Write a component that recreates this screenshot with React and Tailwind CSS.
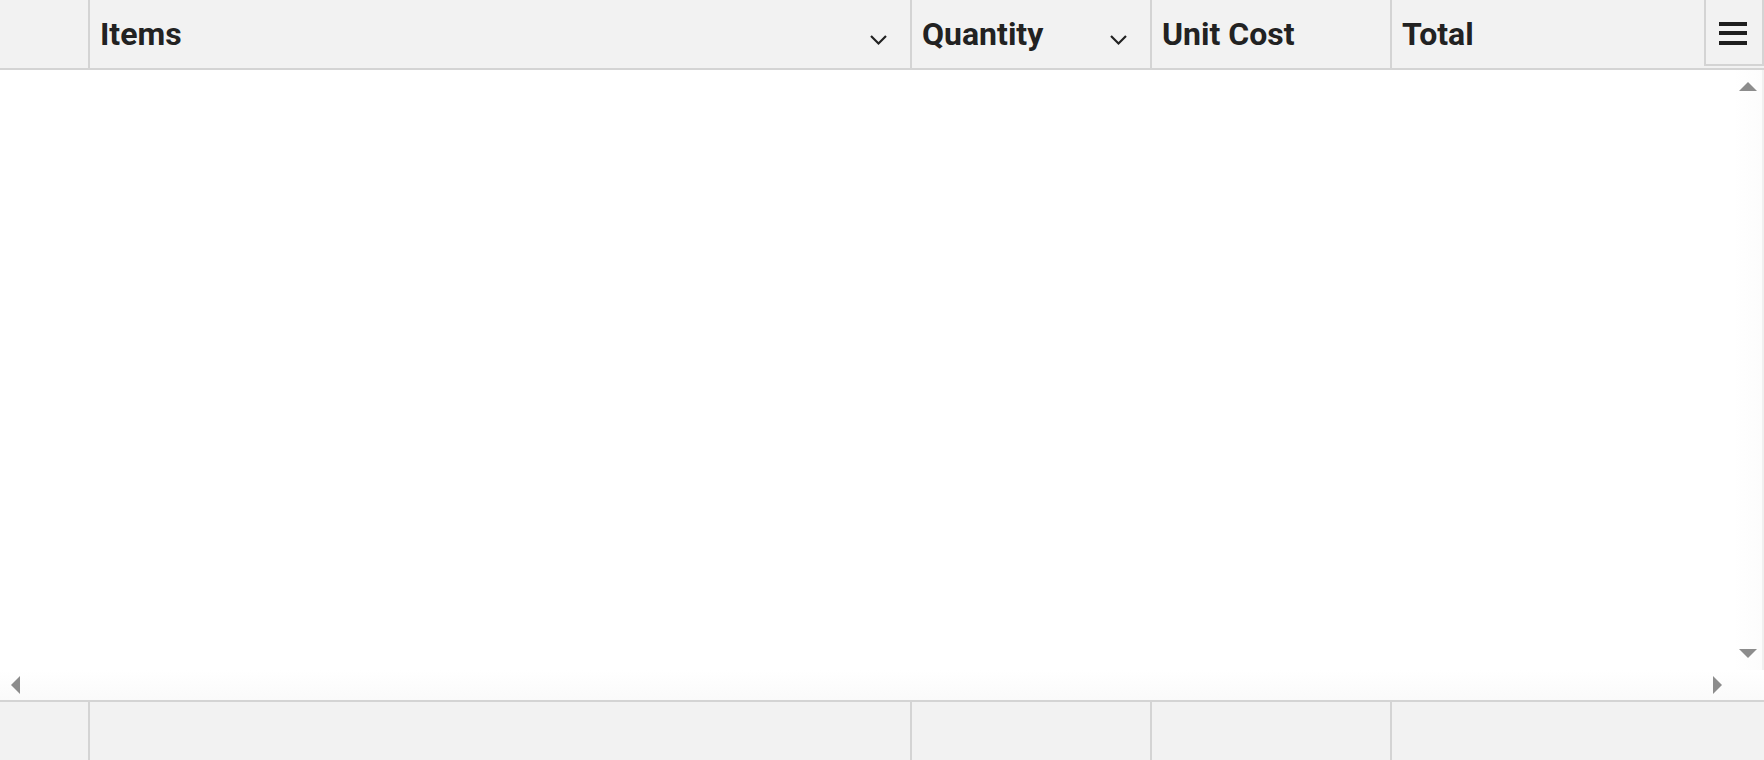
import React from "react";

const cols = [
  { key: "sel", label: "", width: "w-[88px]" },
  { key: "items", label: "Items", width: "w-[822px]", chevron: true },
  { key: "qty", label: "Quantity", width: "w-[240px]", chevron: true },
  { key: "unit", label: "Unit Cost", width: "w-[240px]" },
  { key: "total", label: "Total", width: "flex-1" },
];

const Chevron = () => (
  <svg width="19" height="12" viewBox="0 0 19 12" className="shrink-0 mt-[12px]">
    <path d="M2 2 L9.5 9.5 L17 2" fill="none" stroke="#222" strokeWidth="2.2" />
  </svg>
);

const Tri = ({ dir }) => {
  const pts = {
    up: "0,9 9,0 18,9",
    down: "0,0 18,0 9,9",
    left: "9,0 9,18 0,9",
    right: "0,0 9,9 0,18",
  }[dir];
  const vert = dir === "up" || dir === "down";
  return (
    <svg width={vert ? 18 : 9} height={vert ? 9 : 18} viewBox={vert ? "0 0 18 9" : "0 0 9 18"}>
      <polygon points={pts} fill="#8c8c8c" />
    </svg>
  );
};

export default function App() {
  return (
    <div
      className="w-[1764px] h-[760px] bg-white flex flex-col text-[#222] overflow-hidden"
      style={{ fontFamily: "Roboto, 'Liberation Sans', sans-serif" }}
    >
      {/* header */}
      <div className="h-[70px] flex bg-[#f2f2f2] border-b-2 border-[#d4d4d4] relative">
        {cols.map((c, i) => (
          <div
            key={c.key}
            className={`${c.width} shrink-0 h-full flex items-center justify-between pl-[10px] pr-[22px] ${
              i > 0 ? "border-l-2 border-[#d4d4d4]" : ""
            }`}
          >
            <span className="text-[32px] font-bold leading-none">{c.label}</span>
            {c.chevron && <Chevron />}
          </div>
        ))}
        {/* column menu button */}
        <div className="absolute right-0 top-0 w-[60px] h-[66px] border-l-2 border-r-2 border-b-2 border-[#d4d4d4] bg-[#f2f2f2] flex items-center justify-center">
          <div className="flex flex-col gap-[5.5px] w-[28px] ml-[-2px] mt-[2px]">
            <div className="h-[4px] bg-[#1e1e1e]" />
            <div className="h-[4px] bg-[#1e1e1e]" />
            <div className="h-[4px] bg-[#1e1e1e]" />
          </div>
        </div>
      </div>

      {/* body */}
      <div className="h-[630px] flex flex-col">
        <div className="flex-1 flex">
          <div className="flex-1" />
          <div className="w-[30px] flex flex-col items-center justify-between py-[12px] bg-gradient-to-r from-white to-[#fcfcfc] border-r-2 border-[#f0f0f0]">
            <Tri dir="up" />
            <Tri dir="down" />
          </div>
        </div>
        <div className="h-[30px] flex items-center justify-between pl-[11px] pr-[42px] bg-gradient-to-b from-white to-[#fafafa]">
          <Tri dir="left" />
          <Tri dir="right" />
        </div>
      </div>

      {/* footer */}
      <div className="flex-1 flex bg-[#f2f2f2] border-t-2 border-[#d4d4d4]">
        {cols.map((c, i) => (
          <div
            key={c.key}
            className={`${c.width} shrink-0 h-full ${i > 0 ? "border-l-2 border-[#d4d4d4]" : ""}`}
          />
        ))}
      </div>
    </div>
  );
}
